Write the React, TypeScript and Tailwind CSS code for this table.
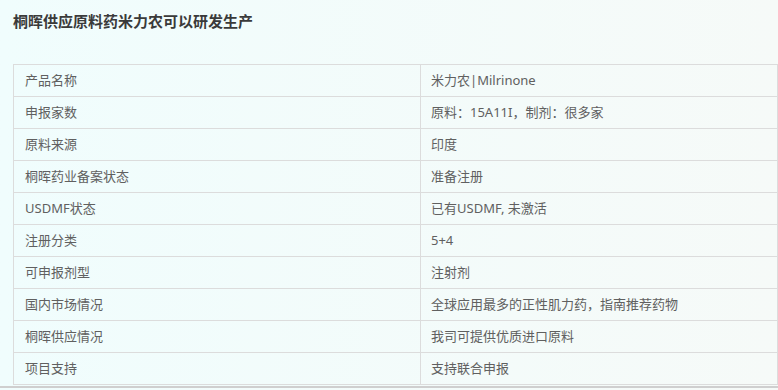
import React from "react";

const rows: [string, string][] = [
  ["产品名称", "米力农|Milrinone"],
  ["申报家数", "原料：15A11I，制剂：很多家"],
  ["原料来源", "印度"],
  ["桐晖药业备案状态", "准备注册"],
  ["USDMF状态", "已有USDMF, 未激活"],
  ["注册分类", "5+4"],
  ["可申报剂型", "注射剂"],
  ["国内市场情况", "全球应用最多的正性肌力药，指南推荐药物"],
  ["桐晖供应情况", "我司可提供优质进口原料"],
  ["项目支持", "支持联合申报"],
];

export default function App() {
  return (
    <div
      className="w-[778px] h-[390px] overflow-hidden bg-gradient-to-r from-[#f0fdfd] to-[#f6faf8] relative"
      style={{ fontFamily: '"Noto Sans", "Noto Sans CJK SC", sans-serif' }}
    >
      <div className="pl-[13px] pt-[11px] h-[64px]">
        <h1 className="text-[15px] leading-[20px] font-bold text-[#3a3a3a]">
          桐晖供应原料药米力农可以研发生产
        </h1>
      </div>
      <div className="ml-[13px] w-[765px] border-l border-r border-t border-[#dcdcdc]">
        {rows.map(([k, v]) => (
          <div key={k} className="flex h-[32px] border-b border-[#dcdcdc]">
            <div className="w-[407px] shrink-0 border-r border-[#dcdcdc] pl-[11px] flex items-center text-[13px] text-[#606060]">
              {k}
            </div>
            <div className="flex-1 pl-[10px] flex items-center text-[13px] text-[#606060]">{v}</div>
          </div>
        ))}
      </div>
      <div className="mt-[1px] h-[2px] bg-[#cfcfcf] w-full" />
    </div>
  );
}
